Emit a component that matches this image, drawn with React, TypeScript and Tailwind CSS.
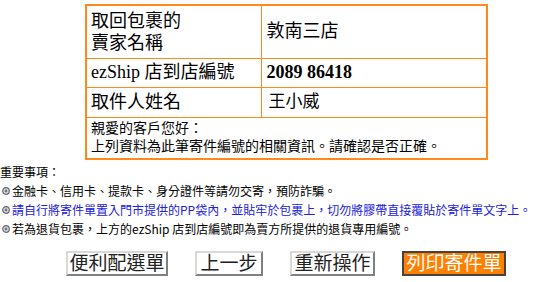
// 取件寄件單確認頁面
import React from 'react';

const cjk = "font-['Liberation_Serif','Noto_Sans_CJK_TC',serif]";

const notes = [
  { text: '金融卡、信用卡、提款卡、身分證件等請勿交寄，預防詐騙。', blue: false },
  { text: '請自行將寄件單置入門市提供的PP袋內，並貼牢於包裹上，切勿將膠帶直接覆貼於寄件單文字上。', blue: true },
  { text: '若為退貨包裹，上方的ezShip 店到店編號即為賣方所提供的退貨專用編號。', blue: false },
];

const Bullet = () => (
  <svg width="8" height="8" viewBox="0 0 8 8" className="ml-[2px] mr-[2px] shrink-0">
    <circle cx="4" cy="4" r="3.3" fill="#d8d8e0" stroke="#666670" strokeWidth="1.2" />
    <circle cx="4" cy="4" r="1.4" fill="#777780" />
  </svg>
);

const App: React.FC = () => {
  return (
    <div className="w-[550px] h-[282px] bg-white overflow-hidden text-black">
      {/* 寄件資料表格 */}
      <table className={`ml-[85px] mt-[4px] w-[403px] border-collapse border-2 border-[#ff8a1a] ${cjk}`}>
        <tbody>
          <tr className="h-[53px]">
            <td className="w-[175px] border border-[#ff8a1a] px-[4px] text-[18px] leading-[22px]">
              取回包裹的
              <br />
              賣家名稱
            </td>
            <td className="border border-[#ff8a1a] px-[5px] text-[18px]">敦南三店</td>
          </tr>
          <tr className="h-[29px]">
            <td className="border border-[#ff8a1a] px-[4px] text-[18px]">ezShip 店到店編號</td>
            <td className="border border-[#ff8a1a] px-[5px] text-[18px] font-bold">2089 86418</td>
          </tr>
          <tr className="h-[30px]">
            <td className="border border-[#ff8a1a] px-[4px] text-[18px]">取件人姓名</td>
            <td className="border border-[#ff8a1a] px-[7px] text-[17px]">王小威</td>
          </tr>
          <tr className="h-[42px]">
            <td colSpan={2} className="border border-[#ff8a1a] px-[4px] text-[14px] leading-[18px]">
              親愛的客戶您好：
              <br />
              上列資料為此筆寄件編號的相關資訊。請確認是否正確。
            </td>
          </tr>
        </tbody>
      </table>

      {/* 重要事項 */}
      <div className="mt-[2px] font-['Noto_Sans_CJK_TC',sans-serif] text-[12px] leading-[19px]">
        <div>重要事項：</div>
        {notes.map((n) => (
          <div key={n.text} className="flex items-center whitespace-nowrap">
            <Bullet />
            <span className={n.blue ? 'text-[#2020e0]' : ''}>{n.text}</span>
          </div>
        ))}
      </div>

      {/* 按鈕 */}
      <div className={`ml-[66px] mt-[13px] flex gap-[27px] ${cjk} text-[19px] leading-[21px]`}>
        <button className="h-[25px] w-[102px] border-2 border-t-[#d8d8d8] border-l-[#d8d8d8] border-r-[#808080] border-b-[#808080] bg-white text-[#222]">
          便利配選單
        </button>
        <button className="h-[25px] w-[68px] border-2 border-t-[#d8d8d8] border-l-[#d8d8d8] border-r-[#808080] border-b-[#808080] bg-white text-[#222]">
          上一步
        </button>
        <button className="h-[25px] w-[85px] border-2 border-t-[#d8d8d8] border-l-[#d8d8d8] border-r-[#808080] border-b-[#808080] bg-white text-[#222]">
          重新操作
        </button>
        <button className="h-[25px] w-[104px] border-2 border-[#444] bg-[#ff8000] text-white">
          列印寄件單
        </button>
      </div>
    </div>
  );
};

export default App;
